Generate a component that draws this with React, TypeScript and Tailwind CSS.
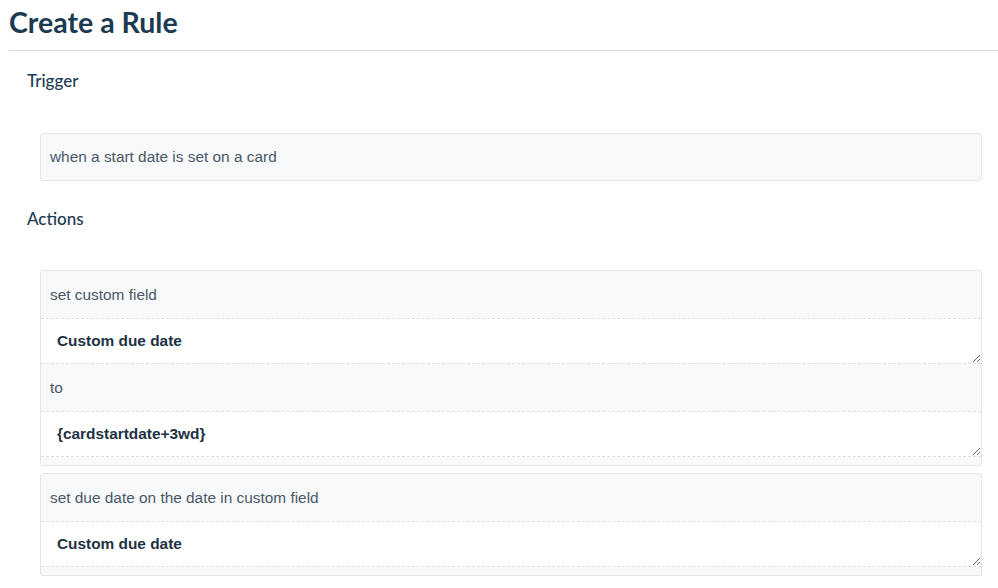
import React from 'react';

type Part = { kind: 'label'; text: string } | { kind: 'field'; value: string };

const trigger = 'when a start date is set on a card';

const actions: Part[][] = [
  [
    { kind: 'label', text: 'set custom field' },
    { kind: 'field', value: 'Custom due date' },
    { kind: 'label', text: 'to' },
    { kind: 'field', value: '{cardstartdate+3wd}' },
  ],
  [
    { kind: 'label', text: 'set due date on the date in custom field' },
    { kind: 'field', value: 'Custom due date' },
  ],
];

function SectionTitle({ children }: { children: React.ReactNode }) {
  return (
    <h2 className="pl-[18px] text-[17px] leading-[24px] font-medium text-[#1d3a50] [font-family:Lato,sans-serif]">
      {children}
    </h2>
  );
}

function ActionBox({ parts }: { parts: Part[] }) {
  return (
    <div className="rounded-[3px] border border-[#e3e6ea] bg-[#f8f9fb] pb-[8px] flex flex-col">
      {parts.map((p, i) =>
        p.kind === 'label' ? (
          <div
            key={i}
            className="h-[47px] flex items-center px-[9px] text-[15.4px] text-[#4a5866] [font-family:'Liberation_Sans',Arial,sans-serif]"
          >
            {p.text}
          </div>
        ) : (
          <textarea
            key={i}
            defaultValue={p.value}
            className="block h-[46px] w-full resize-y border-y border-dashed border-[#dcdfe3] bg-white px-[16px] pt-[10px] text-[15.4px] font-bold text-[#1e3244] outline-none [font-family:'Liberation_Sans',Arial,sans-serif]"
          />
        )
      )}
    </div>
  );
}

export default function App() {
  return (
    <div className="w-[998px] h-[588px] overflow-hidden bg-white pl-[9px]">
      <h1 className="pt-[3px] h-[50px] text-[28.5px] leading-[38px] font-bold text-[#1c3a51] [font-family:Lato,sans-serif]">
        Create a Rule
      </h1>
      <div className="border-t border-[#d6d8db]" />
      <div className="pt-[18px]">
        <SectionTitle>Trigger</SectionTitle>
        <div className="ml-[31px] mr-[16px] mt-[40px] h-[48px] rounded-[3px] border border-[#e3e6ea] bg-[#f8f9fb] flex items-center px-[9px] text-[15.4px] text-[#4a5866] [font-family:'Liberation_Sans',Arial,sans-serif]">
          {trigger}
        </div>
        <div className="pt-[26px]">
          <SectionTitle>Actions</SectionTitle>
        </div>
        <div className="ml-[31px] mr-[16px] mt-[39px] flex flex-col gap-[7px]">
          {actions.map((a, i) => (
            <ActionBox key={i} parts={a} />
          ))}
        </div>
      </div>
    </div>
  );
}
